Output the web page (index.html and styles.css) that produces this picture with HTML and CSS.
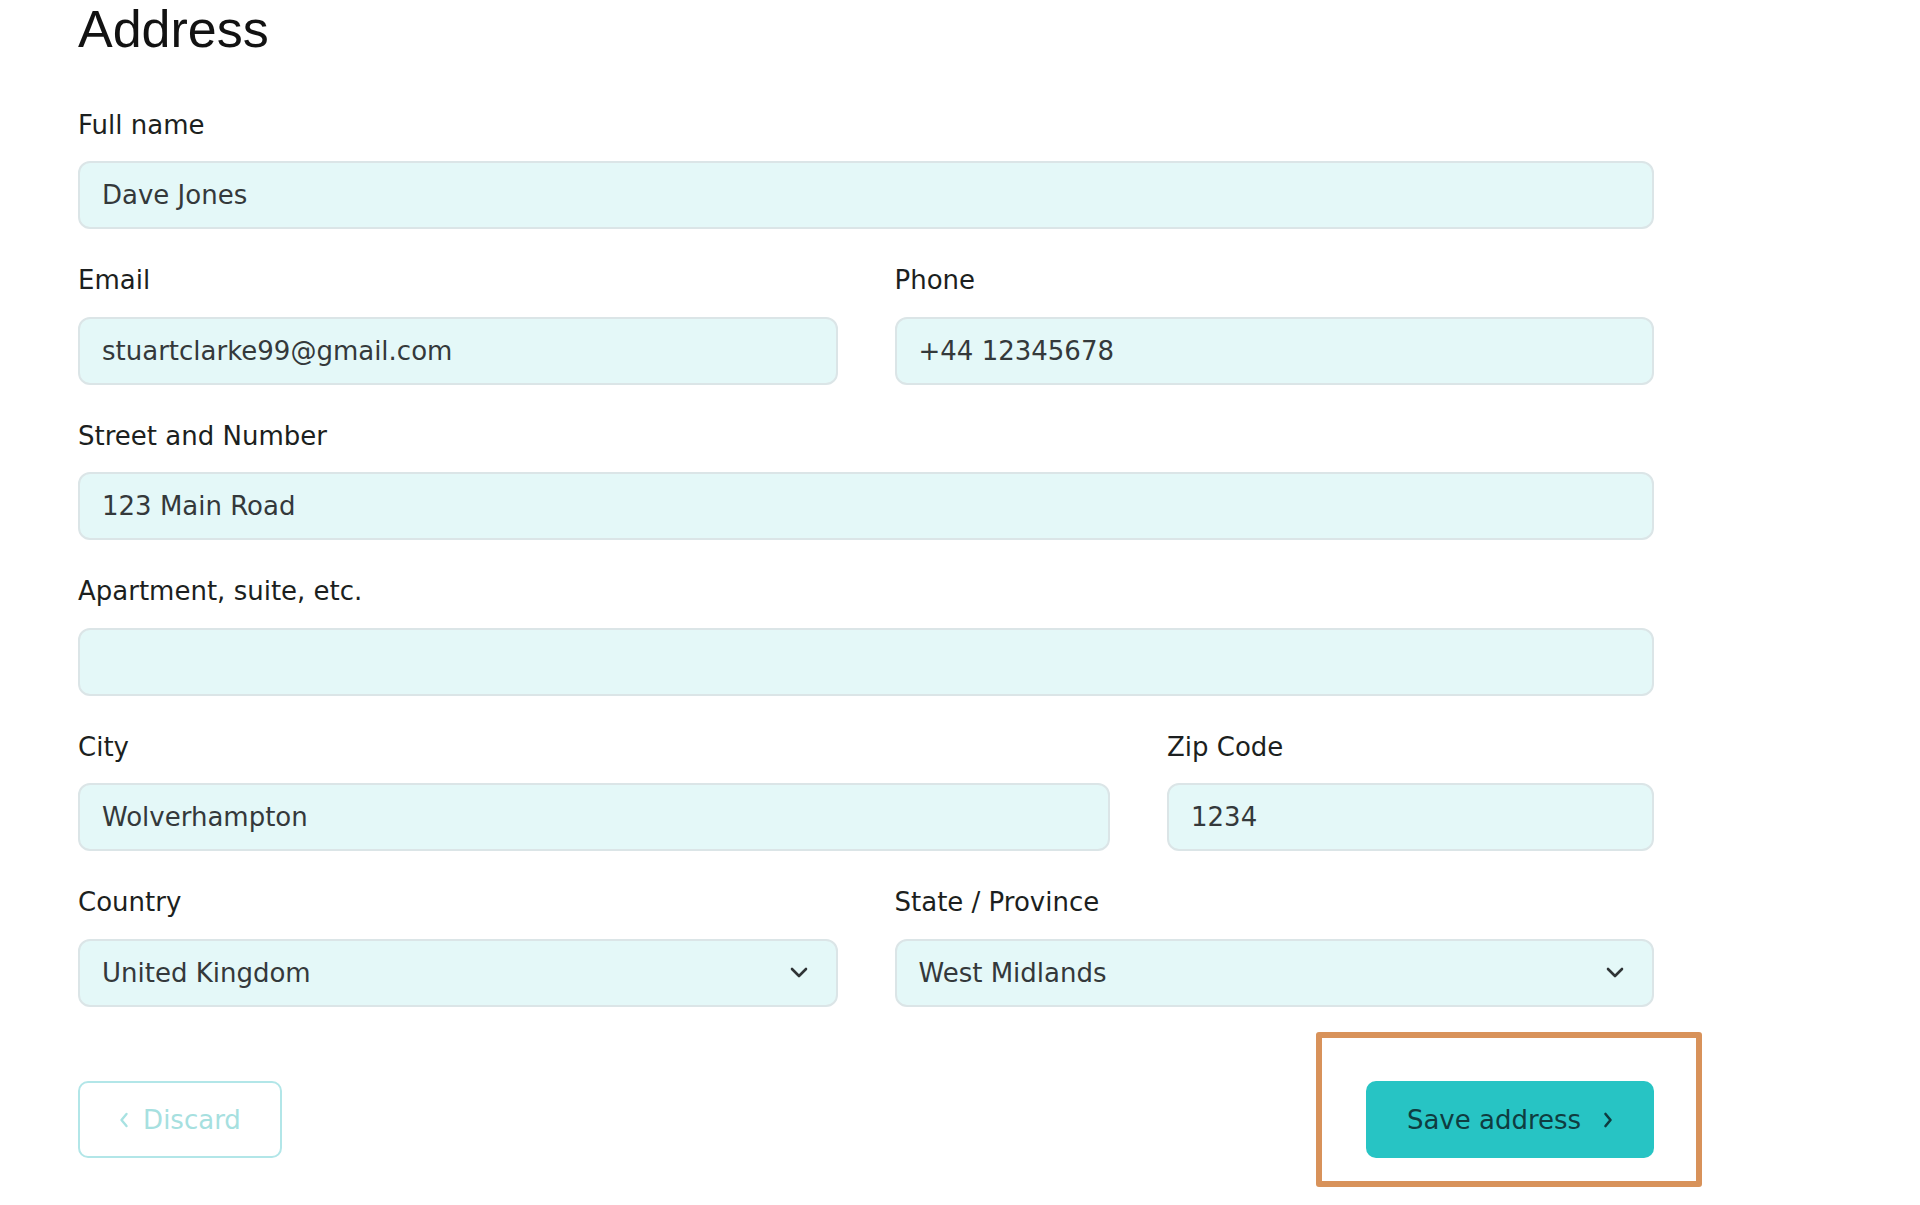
FILE: index.html
```html
<!DOCTYPE html>
<html lang="en">
<head>
<meta charset="utf-8">
<title>Address</title>
<link rel="stylesheet" href="styles.css">
</head>
<body>
<main class="page">
  <h1 class="title">Address</h1>
  <form class="form">
    <div class="group">
      <label class="label">Full name</label>
      <div class="input">Dave Jones</div>
    </div>
    <div class="row halves">
      <div class="group">
        <label class="label">Email</label>
        <div class="input">stuartclarke99@gmail.com</div>
      </div>
      <div class="group">
        <label class="label">Phone</label>
        <div class="input">+44 12345678</div>
      </div>
    </div>
    <div class="group">
      <label class="label">Street and Number</label>
      <div class="input">123 Main Road</div>
    </div>
    <div class="group">
      <label class="label">Apartment, suite, etc.</label>
      <div class="input"></div>
    </div>
    <div class="row city">
      <div class="group">
        <label class="label">City</label>
        <div class="input">Wolverhampton</div>
      </div>
      <div class="group">
        <label class="label">Zip Code</label>
        <div class="input">1234</div>
      </div>
    </div>
    <div class="row halves">
      <div class="group">
        <label class="label">Country</label>
        <div class="input select">
          <span>United Kingdom</span>
          <svg class="chev" width="18" height="11" viewBox="0 0 18 11"><path d="M2 2 L9 9 L16 2" fill="none" stroke="#2f3436" stroke-width="2.6" stroke-linecap="round" stroke-linejoin="round"/></svg>
        </div>
      </div>
      <div class="group">
        <label class="label">State / Province</label>
        <div class="input select">
          <span>West Midlands</span>
          <svg class="chev" width="18" height="11" viewBox="0 0 18 11"><path d="M2 2 L9 9 L16 2" fill="none" stroke="#2f3436" stroke-width="2.6" stroke-linecap="round" stroke-linejoin="round"/></svg>
        </div>
      </div>
    </div>
    <div class="actions">
      <button type="button" class="btn btn-discard">
        <svg class="btn-icon" width="10" height="16" viewBox="0 0 10 16"><path d="M7.5 2 L2.5 8 L7.5 14" fill="none" stroke="#a8e2e2" stroke-width="2.4" stroke-linecap="round" stroke-linejoin="round"/></svg>
        <span>Discard</span>
      </button>
      <div class="highlight">
        <button type="button" class="btn btn-save">
          <span>Save address</span>
          <svg class="btn-icon" width="10" height="16" viewBox="0 0 10 16"><path d="M2.5 2 L7.5 8 L2.5 14" fill="none" stroke="#0f3c40" stroke-width="2.6" stroke-linecap="round" stroke-linejoin="round"/></svg>
        </button>
      </div>
    </div>
  </form>
</main>
</body>
</html>
```

FILE: styles.css
```css
html, body {
  margin: 0;
  background: #ffffff;
}

body {
  font-family: "DejaVu Sans", "Open Sans", "Liberation Sans", sans-serif;
  color: #1c1f20;
}

.page {
  width: 1576px;
  padding: 0 0 48px 78px;
}

.title {
  margin: 0;
  padding-top: 2.5px;
  font-family: "Liberation Sans", Arial, sans-serif;
  font-weight: 400;
  font-size: 52px;
  line-height: 52px;
  color: #121212;
}

.form {
  display: flex;
  flex-direction: column;
  gap: 35px;
  margin-top: 54px;
}

.row {
  display: grid;
  column-gap: 57px;
}

.halves {
  grid-template-columns: 1fr 1fr;
}

.city {
  grid-template-columns: 1032px 1fr;
}

.group {
  display: flex;
  flex-direction: column;
}

.label {
  font-size: 26px;
  line-height: 32px;
  margin-bottom: 20.5px;
  color: #1c1f20;
}

.input {
  box-sizing: border-box;
  height: 68px;
  padding: 0 22px;
  display: flex;
  align-items: center;
  background: #e4f8f8;
  border: 2px solid #dbe5e7;
  border-radius: 12px;
  font-size: 26px;
  color: #34393b;
}

.select {
  justify-content: space-between;
  padding-right: 28px;
}

.chev {
  display: block;
}

.actions {
  display: flex;
  justify-content: space-between;
  align-items: flex-start;
  margin-top: 39.5px;
}

.btn {
  box-sizing: border-box;
  height: 77px;
  display: inline-flex;
  align-items: center;
  justify-content: center;
  font-family: inherit;
  font-size: 26px;
  border-radius: 10px;
  cursor: pointer;
}

.btn-discard {
  width: 204px;
  gap: 14px;
  padding: 0;
  background: #ffffff;
  border: 2px solid #b2e6e8;
  color: #a6e0df;
}

.btn-save {
  width: 288px;
  gap: 22px;
  padding: 0;
  background: #27c4c4;
  border: none;
  color: #0f3c40;
}

.btn-icon {
  display: block;
}

.highlight {
  position: relative;
  display: flex;
}

.highlight::before {
  content: "";
  position: absolute;
  top: -49px;
  left: -50px;
  right: -48px;
  bottom: -29px;
  border: 6px solid #d8925a;
  border-radius: 3px;
  pointer-events: none;
}
```
